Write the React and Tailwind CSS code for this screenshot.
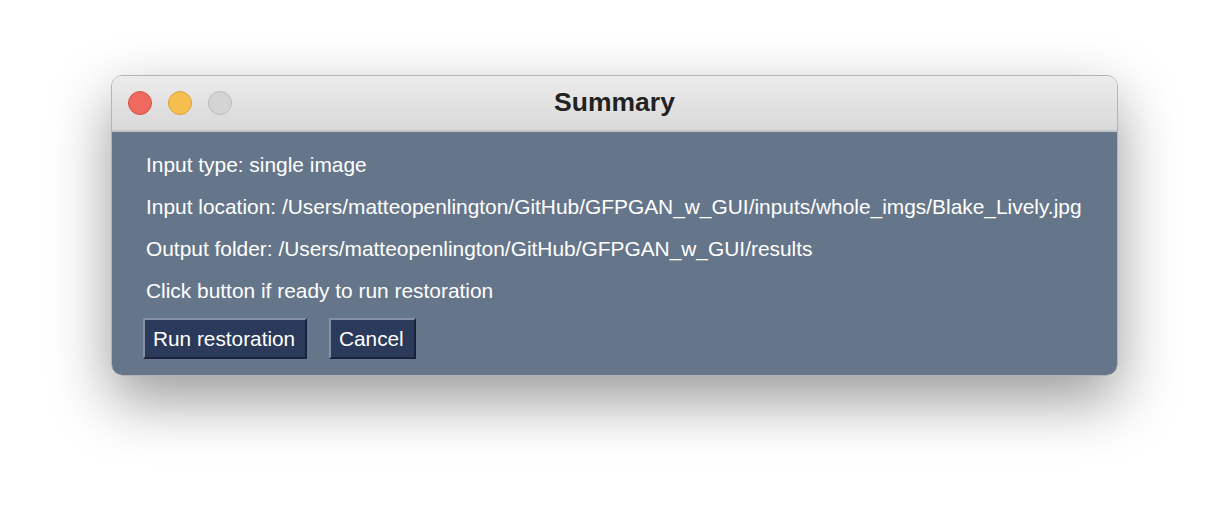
export default function App() {
  return (
    <div className="w-[1230px] h-[524px] bg-white pt-[75px] pl-[111px] font-['Liberation_Sans',Arial,sans-serif]">
      <div className="w-[1007px] h-[301px] rounded-[11px] border border-[#b4b4b4] overflow-hidden flex flex-col shadow-[0_24px_60px_rgba(0,0,0,0.4)]">
        <div className="h-[56px] shrink-0 flex items-center relative bg-gradient-to-b from-[#ececec] to-[#d9d9d9] border-b-2 border-[#c4c4c4]">
          <div className="flex gap-4 pl-4">
            <span className="w-6 h-6 rounded-full bg-[#ee6a5f] border border-[#d65247]" />
            <span className="w-6 h-6 rounded-full bg-[#f5be4f] border border-[#d9a23b]" />
            <span className="w-6 h-6 rounded-full bg-[#d4d4d4] border border-[#bdbdbd]" />
          </div>
          <div className="absolute inset-0 flex items-center justify-center text-[26.5px] font-bold text-[#222]">
            Summary
          </div>
        </div>
        <div className="flex-1 bg-[#66768a] pt-3 pl-[34px] text-white text-[20.9px]">
          <div className="h-[42px] flex items-center">Input type: single image</div>
          <div className="h-[42px] flex items-center">
            Input location: /Users/matteopenlington/GitHub/GFPGAN_w_GUI/inputs/whole_imgs/Blake_Lively.jpg
          </div>
          <div className="h-[42px] flex items-center">
            Output folder: /Users/matteopenlington/GitHub/GFPGAN_w_GUI/results
          </div>
          <div className="h-[42px] flex items-center">Click button if ready to run restoration</div>
          <div className="flex gap-[22px] mt-[6px] -ml-[3px]">
            <button className="h-[41px] w-[164px] bg-[#2b3a5a] text-white text-[20.8px] border-2 border-t-[#8590a2] border-l-[#8590a2] border-b-[#19223a] border-r-[#19223a] text-left pl-2">
              Run restoration
            </button>
            <button className="h-[41px] w-[87px] bg-[#2b3a5a] text-white text-[20.8px] border-2 border-t-[#8590a2] border-l-[#8590a2] border-b-[#19223a] border-r-[#19223a] text-left pl-2">
              Cancel
            </button>
          </div>
        </div>
      </div>
    </div>
  );
}
